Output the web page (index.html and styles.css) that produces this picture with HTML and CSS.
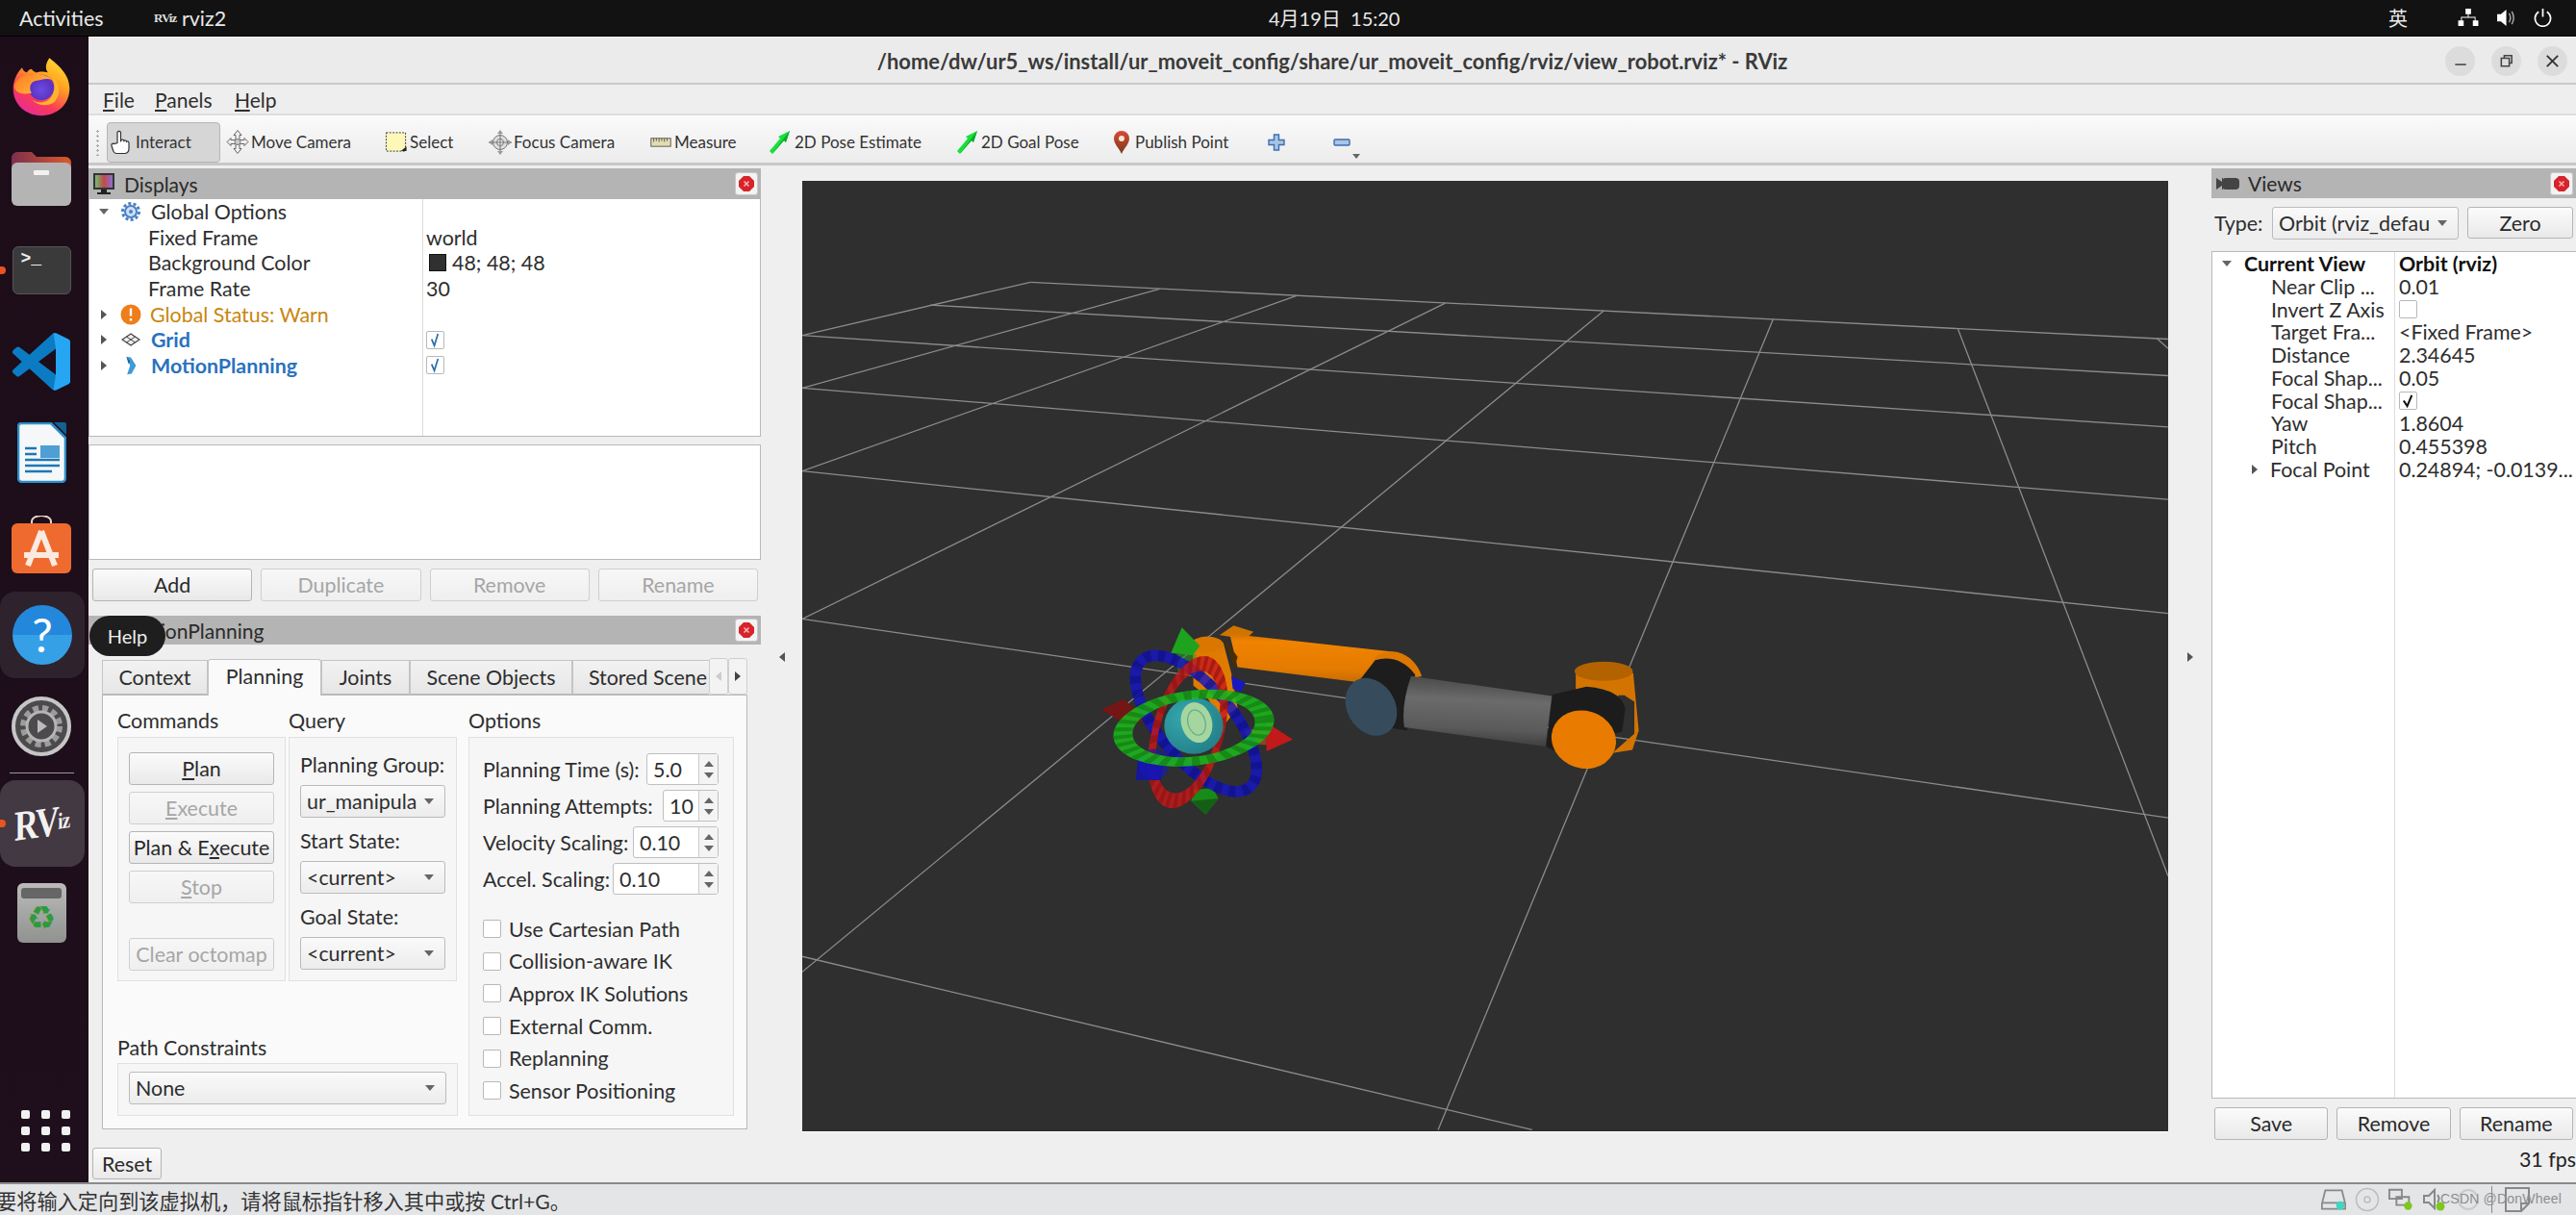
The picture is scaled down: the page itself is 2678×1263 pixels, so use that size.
FILE: index.html
```html
<!DOCTYPE html>
<html lang="en">
<head>
<meta charset="utf-8">
<title>RViz</title>
<link rel="stylesheet" href="styles.css">
</head>
<body>
<div class="desktop">
  <header class="topbar">
    <span class="activities">Activities</span>
    <span class="app-logo">RViz</span>
    <span class="app-name">rviz2</span>
    <span class="clock">4月19日&nbsp;&nbsp;15:20</span>
    <span class="ime">英</span>
    <svg class="tray-net" viewBox="0 0 22 20"><path d="M8 0h6v6H8zM0 13h6v6H0zM16 13h6v6h-6zM10.5 6h1v3H19v4h-1v-3H4v3H3V9h7.500z" fill="#fff"/></svg>
    <svg class="tray-vol" viewBox="0 0 22 20"><path d="M0 6h4l6-5v18l-6-5H0z" fill="#fff"/><path d="M13 5q3 5 0 10M16 3q4 7 0 14" fill="none" stroke="#aaa" stroke-width="1.500"/></svg>
    <svg class="tray-pow" viewBox="0 0 20 20"><path d="M5.500 3.500a8.500 8.500 0 1 0 9 0M10 0v9" fill="none" stroke="#fff" stroke-width="1.800"/></svg>
  </header>

  <div class="middle">
    <nav class="dock">
      <div class="slot">
        <svg class="ic-firefox" viewBox="0 0 180 182">
          <defs>
            <linearGradient id="ff" x1="0.85" y1="0" x2="0.25" y2="1"><stop offset="0" stop-color="#ffe23a"/><stop offset=".35" stop-color="#ffa51f"/><stop offset=".72" stop-color="#f9395a"/><stop offset="1" stop-color="#e52b9a"/></linearGradient>
            <radialGradient id="ffglobe" cx=".5" cy=".6" r=".6"><stop offset="0" stop-color="#6a4be0"/><stop offset=".75" stop-color="#5b32c4"/><stop offset="1" stop-color="#9a2fb0"/></radialGradient>
            <linearGradient id="fftail" x1="0" y1="0" x2="1" y2=".6"><stop offset="0" stop-color="#ff7a1c"/><stop offset="1" stop-color="#ffbc45"/></linearGradient>
          </defs>
          <path d="M115 0C140 20 178 50 178 95C178 145 140 180 90 180C40 180 2 145 2 95C2 70 15 45 30 30C32 38 38 44 45 45C50 38 55 35 60 35C62 40 68 44 75 46C90 40 100 45 110 45C100 30 105 15 115 0Z" fill="url(#ff)"/>
          <circle cx="90" cy="92" r="40" fill="url(#ffglobe)"/>
          <path d="M5 90C10 60 40 50 75 52C90 50 110 55 125 70C105 60 90 70 70 72C55 75 50 95 60 110C30 115 10 110 5 90Z" fill="url(#fftail)"/>
          <path d="M125 62C148 80 152 112 132 136C115 152 80 152 60 130C80 145 110 140 122 120C132 105 135 85 125 62Z" fill="#ffb52e"/>
        </svg>
      </div>
      <div class="slot">
        <svg class="ic-files" viewBox="0 0 62 56"><defs><linearGradient id="tabg" x1="0" y1="0" x2="1" y2="0"><stop offset="0" stop-color="#7d2f4e"/><stop offset="1" stop-color="#dc5a2c"/></linearGradient></defs><path d="M0 6a6 6 0 0 1 6-6h15l5 5h30a6 6 0 0 1 6 6v10H0z" fill="url(#tabg)"/><rect y="11" width="62" height="45" rx="6" fill="#b4b4b4"/><rect x="23" y="19" width="16" height="5" rx="1" fill="#f2f2f2"/></svg>
      </div>
      <div class="slot">
        <div class="ic-term"><span class="term-prompt">&gt;_</span></div>
      </div>
      <div class="slot">
        <svg class="ic-code" viewBox="0 0 100 100"><path d="M96.500 10.800 75.900.9a6.200 6.200 0 0 0-7.100 1.200L29.400 38 12.200 25a4.200 4.200 0 0 0-5.300.2L1.400 30.200a4.200 4.200 0 0 0 0 6.200L16.300 50 1.400 63.600a4.200 4.200 0 0 0 0 6.200l5.500 5a4.200 4.200 0 0 0 5.300.2l17.200-13 39.400 35.900a6.200 6.200 0 0 0 7.100 1.200l20.600-9.900a6.200 6.200 0 0 0 3.500-5.600V16.400a6.200 6.200 0 0 0-3.500-5.600ZM75 72.700 45.100 50 75 27.300Z" fill="#0b7cc4"/><path d="M71 1.200a6.200 6.200 0 0 1 4.900-.3l20.600 9.900a6.200 6.200 0 0 1 3.500 5.600v66.800a6.200 6.200 0 0 1-3.500 5.600l-20.600 9.900a6.200 6.200 0 0 1-4.900-.3L75 72.700V27.300Z" fill="#25a5f2"/></svg>
      </div>
      <div class="slot">
        <svg class="ic-writer" viewBox="0 0 51 63"><path d="M4 1h31l15 15v42a4 4 0 0 1-4 4H5a4 4 0 0 1-4-4V4a3 3 0 0 1 3-3z" fill="#f5f7f8" stroke="#2a8fc9" stroke-width="2.500"/><path d="M38 0l13 13V2a2 2 0 0 0-2-2z" fill="#14608f"/><rect x="24" y="24" width="20" height="13" fill="#4f9ed4"/><path d="M8 27h12M8 33h12M8 39h36M8 45h36M8 51h28" stroke="#1f77b4" stroke-width="2.500"/></svg>
      </div>
      <div class="slot">
        <svg class="ic-store" viewBox="0 0 62 60"><path d="M21 10V6a10 6 0 0 1 20 0v4" fill="none" stroke="#e8d9c8" stroke-width="2"/><rect y="8" width="62" height="52" rx="6" fill="#ef6a2f"/><path d="M31 16 17 52M31 16l14 36M13 41h36" fill="none" stroke="#fbeadf" stroke-width="6"/></svg>
      </div>
      <div class="slot slot-active">
        <div class="ic-help">?</div>
      </div>
      <div class="slot">
        <svg class="ic-settings" viewBox="0 0 62 62"><circle cx="31" cy="31" r="29" fill="#4c4a4c" stroke="#c6c6c6" stroke-width="4"/><circle cx="31" cy="31" r="19" fill="none" stroke="#9c9c9c" stroke-width="6" stroke-dasharray="6 4"/><circle cx="31" cy="31" r="15" fill="#4c4a4c" stroke="#b5b5b5" stroke-width="3"/><path d="M27 24l10 7-10 7z" fill="#bbb"/></svg>
      </div>
      <div class="dock-sep"></div>
      <div class="slot slot-active slot-rviz">
        <span class="running-dot"></span>
        <span class="ic-rviz">RV<small class="iz">iz</small></span>
      </div>
      <div class="slot">
        <div class="ic-trash"><span class="trash-lid"></span><span class="trash-mark">♻</span></div>
      </div>
      <div class="apps">
        <i></i><i></i><i></i><i></i><i></i><i></i><i></i><i></i><i></i>
      </div>
      <span class="running-dot term-dot"></span>
    </nav>

    <div class="tooltip">Help</div>

    <main class="window">
      <div class="titlebar">
        <span class="win-title">/home/dw/ur5_ws/install/ur_moveit_config/share/ur_moveit_config/rviz/view_robot.rviz* - RViz</span>
        <div class="win-btns">
          <span class="win-btn"><svg viewBox="0 0 30 30"><path d="M10 18.500h11" stroke="#444" stroke-width="1.500"/></svg></span>
          <span class="win-btn"><svg viewBox="0 0 30 30"><path d="M10 12h8v8h-8zM13 12V9.500h7.500V17H18" fill="none" stroke="#444" stroke-width="1.500"/></svg></span>
          <span class="win-btn"><svg viewBox="0 0 30 30"><path d="M9.500 9.500l11 11M20.500 9.500l-11 11" stroke="#333" stroke-width="1.800"/></svg></span>
        </div>
      </div>
      <div class="menubar">
        <span class="menu"><u>F</u>ile</span>
        <span class="menu"><u>P</u>anels</span>
        <span class="menu"><u>H</u>elp</span>
      </div>
      <div class="toolbar">
        <span class="grip"></span>
        <div class="tool tool-active tool-interact">
          <svg class="tool-ic" viewBox="0 0 24 26"><path d="M7 14V3a2 2 0 0 1 3.500 0v9l1-1c1-1 2.500 0 2.500 1 1-1 2.500-.5 2.500 .8 1-.8 2.500-.2 2.500 1.200V20a5 5 0 0 1-4 5H6a4 4 0 0 1-3-2l-2-6c-.5-2 2-3 3-2z" fill="#fff" stroke="#333" stroke-width="1.200"/></svg>
          <span>Interact</span>
        </div>
        <div class="tool tool-move">
          <svg class="tool-ic" viewBox="0 0 24 26"><g fill="#eee" stroke="#666"><path d="M12 1l4 5h-2v5h5V9l4 4-4 4v-2h-5v5h2l-4 5-4-5h2v-5H5v2l-4-4 4-4v2h5V6H8z"/></g><circle cx="12" cy="13" r="3" fill="#ccc" stroke="#777"/></svg>
          <span>Move Camera</span>
        </div>
        <div class="tool tool-select">
          <svg class="tool-ic" viewBox="0 0 24 24"><rect x="1" y="2" width="21" height="20" fill="#fdf8b8" stroke="#333" stroke-dasharray="2 1.500"/><path d="M17 22h6v-5z" fill="#222"/></svg>
          <span>Select</span>
        </div>
        <div class="tool tool-focus">
          <svg class="tool-ic" viewBox="0 0 24 26"><circle cx="12" cy="13" r="7.500" fill="#ddd" stroke="#777"/><circle cx="12" cy="13" r="3.500" fill="#eee" stroke="#777"/><path d="M12 1v24M0 13h24" stroke="#777"/><path d="M12 0l3 4H9zM12 26l3-4H9zM0 13l4-3v6zM24 13l-4-3v6z" fill="#999"/></svg>
          <span>Focus Camera</span>
        </div>
        <div class="tool tool-measure">
          <svg class="tool-ic" viewBox="0 0 24 14"><rect x="1" y="3" width="22" height="9" fill="#e4dcae" stroke="#555"/><path d="M4 3v4M7 3v3M10 3v4M13 3v3M16 3v4M19 3v3" stroke="#555"/></svg>
          <span>Measure</span>
        </div>
        <div class="tool tool-pose">
          <svg class="tool-ic" viewBox="0 0 22 24"><path d="M0 21 11 8 9 6 21 0 17 12 15 10 3 24z" fill="#14e23a"/><path d="M3 24 15 10 17 12 21 0 14 9z" fill="#0da82a"/></svg>
          <span>2D Pose Estimate</span>
        </div>
        <div class="tool tool-goal">
          <svg class="tool-ic" viewBox="0 0 22 24"><path d="M0 21 11 8 9 6 21 0 17 12 15 10 3 24z" fill="#14e23a"/><path d="M3 24 15 10 17 12 21 0 14 9z" fill="#0da82a"/></svg>
          <span>2D Goal Pose</span>
        </div>
        <div class="tool tool-point">
          <svg class="tool-ic" viewBox="0 0 16 24"><defs><linearGradient id="pin" x1="0" y1="0" x2="0" y2="1"><stop offset="0" stop-color="#d94a35"/><stop offset="1" stop-color="#7a3a1a"/></linearGradient></defs><path d="M8 0a8 8 0 0 1 8 8c0 6-5 9-8 16C5 17 0 14 0 8a8 8 0 0 1 8-8z" fill="url(#pin)"/><circle cx="8" cy="8" r="3" fill="#f6e6d8"/></svg>
          <span>Publish Point</span>
        </div>
        <div class="tool tool-plus">
          <svg class="tool-ic" viewBox="0 0 18 18"><path d="M6.500 1h5v5.500H17v5h-5.500V17h-5v-5.500H1v-5h5.500z" fill="#a9c4e6" stroke="#3d6eb0" stroke-width="1.400"/></svg>
        </div>
        <div class="tool tool-minus">
          <svg class="tool-ic" viewBox="0 0 18 8"><rect x="1" y="1" width="16" height="6" rx="1" fill="#a9c4e6" stroke="#3d6eb0" stroke-width="1.400"/></svg>
          <span class="more-arrow"></span>
        </div>
      </div>

      <div class="workspace">
        <section class="left-dock">
          <div class="panel-title">
            <svg class="panel-ic" viewBox="0 0 24 24"><rect x="1" y="1" width="22" height="17" fill="#333"/><defs><linearGradient id="mon" x1="0" y1="0" x2="1" y2="0"><stop offset="0" stop-color="#6fbf73"/><stop offset=".5" stop-color="#c04a4a"/><stop offset="1" stop-color="#8a6fd1"/></linearGradient></defs><rect x="3" y="3" width="18" height="13" fill="url(#mon)"/><path d="M9 18h6v3h4v2H5v-2h4z" fill="#222"/></svg>
            <span>Displays</span>
            <span class="close-btn"><svg viewBox="0 0 16 16"><path d="M5 0h6l5 5v6l-5 5H5l-5-5V5z" fill="#d8232a"/><path d="M5.500 5.500l5 5M10.500 5.500l-5 5" stroke="#f4b7b7" stroke-width="1.500"/></svg></span>
          </div>
          <div class="tree tree-displays">
            <div class="row">
              <span class="tw tw-open"></span>
              <svg class="node-ic" viewBox="0 0 20 20"><circle cx="10" cy="10" r="6" fill="#cfe0f5" stroke="#4a80c4" stroke-width="2"/><circle cx="10" cy="10" r="8.500" fill="none" stroke="#4a80c4" stroke-width="3" stroke-dasharray="3 2.300"/><circle cx="10" cy="10" r="2" fill="#4a80c4"/></svg>
              <span class="name">Global Options</span>
            </div>
            <div class="row row-child"><span class="name">Fixed Frame</span><span class="val">world</span></div>
            <div class="row row-child"><span class="name">Background Color</span><span class="val"><span class="swatch"></span>48; 48; 48</span></div>
            <div class="row row-child"><span class="name">Frame Rate</span><span class="val">30</span></div>
            <div class="row">
              <span class="tw"></span>
              <svg class="node-ic node-warn" viewBox="0 0 22 22"><circle cx="11" cy="11" r="10.500" fill="#ee7d1c"/><path d="M11 4.500v8M11 15v2.500" stroke="#fff" stroke-width="2.400"/></svg>
              <span class="name warn">Global Status: Warn</span>
            </div>
            <div class="row">
              <span class="tw"></span>
              <svg class="node-ic" viewBox="0 0 20 14"><path d="M10 1l9 6-9 6-9-6z" fill="#eee" stroke="#444" stroke-width="1.300"/><path d="M5.500 4l9 6M14.500 4l-9 6" stroke="#444"/></svg>
              <span class="name link">Grid</span>
              <span class="val"><span class="check check-blue"><svg viewBox="0 0 18 18"><path d="M5 8l3 7 4-13" fill="none" stroke="#2a6cb0" stroke-width="1.800"/></svg></span></span>
            </div>
            <div class="row">
              <span class="tw"></span>
              <svg class="node-ic" viewBox="0 0 18 26"><path d="M3 1l6 1 7 11-6 11-6 1 4-12z" fill="#3d9bd6"/><path d="M3 1l5 6-2 4z" fill="#1f5f8c"/></svg>
              <span class="name link">MotionPlanning</span>
              <span class="val"><span class="check check-blue"><svg viewBox="0 0 18 18"><path d="M5 8l3 7 4-13" fill="none" stroke="#2a6cb0" stroke-width="1.800"/></svg></span></span>
            </div>
          </div>
          <div class="desc-box"></div>
          <div class="btn-row">
            <button class="btn">Add</button>
            <button class="btn" disabled>Duplicate</button>
            <button class="btn" disabled>Remove</button>
            <button class="btn" disabled>Rename</button>
          </div>

          <div class="panel-title panel-title-mp">
            <span class="mp-title">MotionPlanning</span>
            <span class="close-btn"><svg viewBox="0 0 16 16"><path d="M5 0h6l5 5v6l-5 5H5l-5-5V5z" fill="#d8232a"/><path d="M5.500 5.500l5 5M10.500 5.500l-5 5" stroke="#f4b7b7" stroke-width="1.500"/></svg></span>
          </div>

          <div class="tabs">
            <span class="tab tab-context">Context</span>
            <span class="tab tab-planning">Planning</span>
            <span class="tab tab-joints">Joints</span>
            <span class="tab tab-scene">Scene Objects</span>
            <span class="tab tab-stored">Stored Scene</span>
            <span class="tab-scroll"><span class="tri-left"></span></span>
            <span class="tab-scroll"><span class="tri-right"></span></span>
          </div>
          <div class="pane">
            <div class="pane-left">
              <div class="pane-top">
                <div class="col-cmd">
                  <h4 class="heading">Commands</h4>
                  <div class="group group-cmd">
                    <button class="btn"><u>P</u>lan</button>
                    <button class="btn" disabled><u>E</u>xecute</button>
                    <button class="btn">Plan &amp; E<u>x</u>ecute</button>
                    <button class="btn" disabled><u>S</u>top</button>
                    <button class="btn btn-clear" disabled>Clear octomap</button>
                  </div>
                </div>
                <div class="col-query">
                  <h4 class="heading">Query</h4>
                  <div class="group group-query">
                    <label class="qlabel">Planning Group:</label>
                    <div class="combo"><span class="combo-text">ur_manipulator</span><span class="tri-down"></span></div>
                    <label class="qlabel">Start State:</label>
                    <div class="combo"><span class="combo-text">&lt;current&gt;</span><span class="tri-down"></span></div>
                    <label class="qlabel">Goal State:</label>
                    <div class="combo"><span class="combo-text">&lt;current&gt;</span><span class="tri-down"></span></div>
                  </div>
                </div>
              </div>
              <div class="col-path">
                <h4 class="heading heading-path">Path Constraints</h4>
                <div class="group group-path">
                  <div class="combo"><span class="combo-text">None</span><span class="tri-down"></span></div>
                </div>
              </div>
            </div>
            <div class="col-options">
              <h4 class="heading">Options</h4>
              <div class="group group-options">
                <div class="spin-row"><span class="lbl-time">Planning Time (s):</span><div class="spin"><span class="spin-text">5.0</span><span class="steppers"><span class="tri-up"></span><span class="tri-down"></span></span></div></div>
                <div class="spin-row"><span class="lbl-att">Planning Attempts:</span><div class="spin"><span class="spin-text">10</span><span class="steppers"><span class="tri-up"></span><span class="tri-down"></span></span></div></div>
                <div class="spin-row"><span class="lbl-vel">Velocity Scaling:</span><div class="spin"><span class="spin-text">0.10</span><span class="steppers"><span class="tri-up"></span><span class="tri-down"></span></span></div></div>
                <div class="spin-row"><span class="lbl-acc">Accel. Scaling:</span><div class="spin"><span class="spin-text">0.10</span><span class="steppers"><span class="tri-up"></span><span class="tri-down"></span></span></div></div>
                <div class="checks">
                  <div class="opt"><span class="check"></span>Use Cartesian Path</div>
                  <div class="opt"><span class="check"></span>Collision-aware IK</div>
                  <div class="opt"><span class="check"></span>Approx IK Solutions</div>
                  <div class="opt"><span class="check"></span>External Comm.</div>
                  <div class="opt"><span class="check"></span>Replanning</div>
                  <div class="opt"><span class="check"></span>Sensor Positioning</div>
                </div>
              </div>
            </div>
          </div>
          <button class="btn btn-reset">Reset</button>
        </section>

        <section class="center">
          <span class="split-arrow"><span class="tri-left tri-dark"></span></span>
          <div class="viewport">
            <svg class="scene" viewBox="0 0 1420 989" preserveAspectRatio="none">
              <defs>
                <linearGradient id="cyl" x1="0.1" y1="0" x2="0" y2="1"><stop offset="0" stop-color="#4a4a4a"/><stop offset=".3" stop-color="#6b6b6b"/><stop offset=".7" stop-color="#5a5a5a"/><stop offset="1" stop-color="#333"/></linearGradient>
                <linearGradient id="org" x1="0.05" y1="0" x2="0" y2="1"><stop offset="0" stop-color="#cf7200"/><stop offset=".15" stop-color="#f08300"/><stop offset=".7" stop-color="#e47b00"/><stop offset="1" stop-color="#c26a00"/></linearGradient>
                <radialGradient id="sph" cx=".35" cy=".35" r=".8"><stop offset="0" stop-color="#36aeb6"/><stop offset="1" stop-color="#1f7f88"/></radialGradient>
              </defs>
              <g transform="translate(-14 -8) scale(.9311 .6443)" class="grid">
                <path d="M270 176 1540 268M158 213 1540 327M15 262 1540 410M15 347 1540 527M15 481 1540 711M15 720 1540 1041M15 1265 830 1545"/>
                <path d="M270 176 15 262M414 187 15 347M567 198 15 481M733 210 15 720M910 222 15 1290M1099 236 725 1545M1305 250 1540 1135M1527 266 1540 283"/>
              </g>
              <!-- robot links -->
              <g transform="translate(266 432) scale(.4146 .3333)">
                <path d="M405 122 440 92 490 112 470 135Z" fill="#d07400"/>
                <path d="M430 118 845 175 900 240 760 270 450 222 Z" fill="url(#org)"/>
                <path d="M790 195q20-25 60-20 45 15 62 75l-30 10z" fill="#dc7800"/>
                <path d="M755 265 795 200q60-20 100 45l-20 175-50-10z" fill="#1d1d1d"/>
                <path d="M885 250 1238 312 1222 470 868 410q-8-70 17-160z" fill="url(#cyl)"/>
                <ellipse cx="785" cy="346" rx="62" ry="92" transform="rotate(-16 785 346)" fill="#364c5c"/>
                <path d="M1298 235V310H1420L1445 330V430L1390 490 1440 480 1456 420 1442 240Z" fill="#d47400"/>
                <ellipse cx="1368" cy="235" rx="73" ry="30" fill="#b26300"/>
                <path d="M1240 308 1325 283q90 10 97 70l-8 70-160 65-30-18z" fill="#1c1c1c"/>
                <ellipse cx="1318" cy="448" rx="80" ry="92" transform="rotate(-16 1318 448)" fill="#e97b00"/>
              </g>
              <!-- wrist and interactive marker; drawn at one third scale -->
              <g transform="translate(306 452) scale(.3333)">
                <path d="M300 100 395 85 420 180 440 290 400 340 340 250 302 220Z" fill="#e07b00"/>
                <ellipse cx="345" cy="92" rx="50" ry="26" fill="#d97700"/>
                <path d="M395 70 440 130 430 165 412 110Z" fill="#4a2e00"/>
                <path d="M250 120 312 122 302 190 255 180Z" fill="#2c9a2c" opacity=".55"/>
                <path d="M266 38 322 95 300 125 232 118Z" fill="#1ea31e"/>
                <path d="M465 360 530 345 530 405 470 400Z" fill="#b84a22" opacity=".7"/>
                <path d="M612 388 530 335 530 425Z" fill="#c21a1a"/>
                <path d="M15 295 85 262 155 325 100 345Z" fill="#741616"/>
                <path d="M420 190 465 210 450 240 425 230Z" fill="#1818c0"/>
                <path d="M300 545 362 540 380 572 340 622 295 580Z" fill="#188a18"/>
                <path d="M340 622 295 580 380 572Z" fill="#155f15"/>
                <ellipse cx="310" cy="338" rx="115" ry="260" transform="rotate(-40 310 338)" class="ring ring-blue"/>
                <ellipse cx="310" cy="338" rx="115" ry="260" transform="rotate(-40 310 338)" class="ring ring-blue-d"/>
                <circle r="100" transform="translate(285 365) rotate(15) scale(1 2.2)" class="ring ring-red"/>
                <circle r="100" transform="translate(285 365) rotate(15) scale(1 2.2)" class="ring ring-red-d"/>
                <path d="M122 515 130 440 210 450 200 515Z" fill="#1414a8" opacity=".9"/>
                <circle cx="180" cy="465" r="48" fill="#1616c0" opacity=".55"/>
                <ellipse cx="303" cy="345" rx="92" ry="88" fill="url(#sph)" opacity=".95"/>
                <ellipse cx="312" cy="335" rx="48" ry="64" transform="rotate(-15 312 335)" fill="#a6d6a0"/>
                <ellipse cx="312" cy="335" rx="27" ry="40" transform="rotate(-15 312 335)" fill="none" stroke="#6aae86" stroke-width="4"/>
                <circle r="100" transform="translate(303 352) rotate(-7) scale(2.22 1.03)" class="ring ring-green"/>
                <circle r="100" transform="translate(303 352) rotate(-7) scale(2.22 1.03)" class="ring ring-green-d"/>
              </g>
            </svg>
          </div>
          <span class="split-arrow split-right"><span class="tri-right tri-dark"></span></span>
        </section>

        <section class="right-dock">
          <div class="panel-title panel-title-views">
            <svg class="panel-ic" viewBox="0 0 24 14"><path d="M0 1l6 4V1h1v12H6V9l-6 4z" fill="#444"/><rect x="6" y="1" width="18" height="12" rx="4" fill="#444"/></svg>
            <span>Views</span>
            <span class="close-btn"><svg viewBox="0 0 16 16"><path d="M5 0h6l5 5v6l-5 5H5l-5-5V5z" fill="#d8232a"/><path d="M5.500 5.500l5 5M10.500 5.500l-5 5" stroke="#f4b7b7" stroke-width="1.500"/></svg></span>
          </div>
          <div class="type-row">
            <span class="type-lbl">Type:</span>
            <div class="combo combo-type"><span class="combo-text">Orbit (rviz_default_plugins)</span><span class="tri-down"></span></div>
            <button class="btn btn-zero">Zero</button>
          </div>
          <div class="tree tree-views">
            <div class="vrow vrow-head"><span class="tw tw-open"></span><span class="vname">Current View</span><span class="vval">Orbit (rviz)</span></div>
            <div class="vrow"><span class="vname">Near Clip ...</span><span class="vval">0.01</span></div>
            <div class="vrow"><span class="vname">Invert Z Axis</span><span class="vval"><span class="check"></span></span></div>
            <div class="vrow"><span class="vname">Target Fra...</span><span class="vval">&lt;Fixed Frame&gt;</span></div>
            <div class="vrow"><span class="vname">Distance</span><span class="vval">2.34645</span></div>
            <div class="vrow"><span class="vname">Focal Shap...</span><span class="vval">0.05</span></div>
            <div class="vrow"><span class="vname">Focal Shap...</span><span class="vval"><span class="check"><svg viewBox="0 0 18 18"><path d="M4 9l4 6 5-12" fill="none" stroke="#111" stroke-width="2.200"/></svg></span></span></div>
            <div class="vrow"><span class="vname">Yaw</span><span class="vval">1.8604</span></div>
            <div class="vrow"><span class="vname">Pitch</span><span class="vval">0.455398</span></div>
            <div class="vrow vrow-sub"><span class="tw"></span><span class="vname">Focal Point</span><span class="vval">0.24894; -0.0139...</span></div>
          </div>
          <div class="btn-row btn-row-views">
            <button class="btn">Save</button>
            <button class="btn">Remove</button>
            <button class="btn">Rename</button>
          </div>
          <div class="fps">31 fps</div>
        </section>
      </div>
    </main>
  </div>

  <footer class="statusbar">
    <span class="status-msg">要将输入定向到该虚拟机，请将鼠标指针移入其中或按 Ctrl+G。</span>
    <div class="vm-icons">
      <svg class="vm-ic" viewBox="0 0 30 26"><path d="M5 2h20l4 16v6H1v-6zM1 17h28" fill="none" stroke="#888" stroke-width="2"/><circle cx="23" cy="20" r="5" fill="#3fd6c2"/></svg>
      <svg class="vm-ic" viewBox="0 0 26 26"><circle cx="13" cy="13" r="11.500" fill="none" stroke="#bdbdbd" stroke-width="1.500"/><circle cx="13" cy="13" r="3" fill="none" stroke="#bdbdbd" stroke-width="1.500"/></svg>
      <svg class="vm-ic" viewBox="0 0 28 26"><path d="M1 2h14v10H1zM9 10h14v9H9z" fill="none" stroke="#888" stroke-width="2"/><circle cx="22" cy="20" r="4.500" fill="#7cc81e"/></svg>
      <svg class="vm-ic" viewBox="0 0 24 26"><path d="M1 9h5l6-6v19l-6-6H1z" fill="none" stroke="#888" stroke-width="2"/><path d="M15 8q3 4 0 8" fill="none" stroke="#888" stroke-width="2"/><circle cx="18" cy="20" r="4.500" fill="#7cc81e"/></svg>
      <svg class="vm-ic vm-ic-faint" viewBox="0 0 26 26"><circle cx="13" cy="13" r="10" fill="none" stroke="#c4c4c4" stroke-width="2"/></svg>
      <span class="vm-sep"></span>
      <svg class="vm-ic" viewBox="0 0 26 26"><path d="M1 1h24v16l-8 8H1z" fill="none" stroke="#888" stroke-width="2"/><path d="M17 25v-8h8" fill="none" stroke="#888" stroke-width="2"/></svg>
    </div>
    <span class="watermark">CSDN @DonWheel</span>
  </footer>
</div>
</body>
</html>
```

FILE: styles.css
```css
* { box-sizing: border-box; }
html, body { margin: 0; padding: 0; height: 100%; }
body { font-family: "Lato", "Noto Sans CJK SC", sans-serif; font-size: 21.4px; color: #2e2e2e; overflow: hidden; background: #efefef; }
h4 { margin: 0; font-weight: 400; font-size: inherit; }
u { text-decoration-thickness: 2px; text-underline-offset: 2px; }
svg { display: block; }

.desktop { width: 2678px; height: 1263px; display: flex; flex-direction: column; }

/* top bar */
.topbar { height: 38px; flex: none; background: #121212; color: #e9e9e9; display: flex; align-items: center; border-bottom: 1px solid #000; font-size: 21.4px; position: relative; }
.activities { margin-left: 20px; width: 140px; }
.app-logo { width: 29px; font: 700 13px "Liberation Serif", serif; color: #ddd; letter-spacing: -1px; }
.app-name { width: 1130px; }
.clock { font-family: "Lato", "Noto Sans CJK SC", sans-serif; width: 1172px; font-size: 20px; }
.ime { font-family: "Noto Sans CJK SC", sans-serif; width: 70px; margin-left: -8px; font-size: 20px; }
.tray-net { width: 22px; height: 19px; margin-left: 2px; }
.tray-vol { width: 21px; height: 19px; margin-left: 19px; }
.tray-pow { width: 19px; height: 19px; margin-left: 17px; }

.middle { flex: 1; display: flex; min-height: 0; position: relative; }

/* dock */
.dock { width: 92px; flex: none; background: linear-gradient(#1c0d19, #1f0f1c); display: flex; flex-direction: column; padding: 5px 0 32px; position: relative; }
.slot { height: 95px; flex: none; display: flex; align-items: center; justify-content: center; width: 86px; position: relative; }
.slot-active { background: #2e222d; width: 88px; height: 90px; margin-block: 2px; border-radius: 16px; }
.slot-rviz { margin-block: 2px 0; background: #433942; }
.ic-firefox { width: 60px; height: 61px; }
.ic-files { width: 62px; height: 56px; }
.ic-term { width: 61px; height: 50px; background: #3a3a3a; border-radius: 6px; border: 1px solid #555; padding: 2px 8px; color: #eee; font: 700 18px/20px "Liberation Mono", monospace; }
.term-prompt { display: block; }
.ic-code { width: 60px; height: 60px; }
.ic-writer { width: 51px; height: 63px; }
.ic-store { width: 62px; height: 60px; }
.ic-help { width: 62px; height: 62px; border-radius: 50%; background: linear-gradient(#2388dc 50%, #36a0e6 50%); color: #fff; font: 400 48px/62px "Lato", sans-serif; text-align: center; }
.ic-settings { width: 62px; height: 62px; }
.dock-sep { height: 1px; background: #9a9a9a; margin: 1px 15px 5px 10px; width: 67px; flex: none; }
.ic-rviz { font: 700 44px/1 "Liberation Serif", serif; color: #f2f2f2; letter-spacing: -2px; transform: skewY(-8deg) scaleX(.78); white-space: nowrap; }
.iz { font-size: 24px; letter-spacing: -1px; vertical-align: 6px; }
.running-dot { position: absolute; left: 0; width: 6px; height: 8px; background: #e95420; border-radius: 0 4px 4px 0; }
.term-dot { top: 239px; }
.ic-trash { width: 51px; height: 62px; background: linear-gradient(#bbb, #8f928e); border-radius: 6px; display: flex; flex-direction: column; align-items: center; padding-top: 5px; }
.trash-lid { width: 42px; height: 11px; background: #666; border-radius: 3px; flex: none; }
.trash-mark { color: #2f9a3a; font: 700 34px/40px "DejaVu Sans", sans-serif; }
.apps { margin-top: auto; margin-left: 22px; width: 51px; display: grid; grid-template-columns: repeat(3, 9px); gap: 8px 12px; }
.apps i { width: 9px; height: 9px; background: #f1f1f1; border-radius: 2px; }

.tooltip { position: absolute; left: 93px; top: 602px; width: 79px; height: 42px; border-radius: 21px; background: #1e1e1e; color: #eee; font-size: 20px; line-height: 42px; text-align: center; z-index: 5; }

/* window */
.window { flex: 1; display: flex; flex-direction: column; min-width: 0; background: #efefef; }
.titlebar { height: 50px; flex: none; background: #ebebeb; border-bottom: 2px solid #c9c9c9; border-top: 1px solid #f6f6f6; display: flex; align-items: center; justify-content: center; position: relative; padding-top: 2px; }
.win-title { font-weight: 700; font-size: 21.9px; color: #3a3a3a; }
.win-btns { position: absolute; right: 9px; top: 9px; display: flex; gap: 17px; }
.win-btn { width: 31px; height: 31px; border-radius: 50%; background: #dcdcdc; }
.menubar { height: 32px; flex: none; background: #eeeeee; border-bottom: 2px solid #dedede; display: flex; align-items: center; font-size: 21px; padding-left: 15px; }
.menu:nth-child(1) { width: 54px; }
.menu:nth-child(2) { width: 83px; }
.toolbar { height: 52px; flex: none; background: linear-gradient(#fafafa, #ececec); border-bottom: 3px solid #c8c8c8; display: flex; align-items: center; font-size: 17px; color: #333; padding-top: 6px; }
.grip { width: 5px; height: 28px; margin: 0 7px 0 7px; background-image: radial-gradient(#aaa 1px, transparent 1.2px); background-size: 5px 5px; flex: none; }
.tool { display: flex; align-items: center; gap: 2px; flex: none; height: 42px; position: relative; }
.tool-active { background: #d6d6d6; border: 1px solid #b5b5b5; border-radius: 4px; padding-left: 3px; }
.tool-interact { width: 118px; margin-right: 6px; }
.tool-move { width: 165px; }
.tool-select { width: 108px; }
.tool-focus { width: 167px; }
.tool-measure { width: 125px; }
.tool-pose { width: 195px; gap: 4px; }
.tool-goal { width: 163px; gap: 3px; }
.tool-point { width: 160px; }
.tool-plus { width: 68px; }
.tool-ic { flex: none; }
.tool-interact .tool-ic, .tool-move .tool-ic { width: 24px; height: 27px; }
.tool-select .tool-ic { width: 24px; height: 23px; }
.tool-focus .tool-ic { width: 24px; height: 26px; }
.tool-measure .tool-ic { width: 24px; height: 13px; }
.tool-pose .tool-ic, .tool-goal .tool-ic { width: 22px; height: 24px; }
.tool-point .tool-ic { width: 16px; height: 24px; margin-right: 4px; }
.tool-plus .tool-ic { width: 18px; height: 18px; }
.tool-minus .tool-ic { width: 18px; height: 8px; }
.more-arrow { position: absolute; left: 20px; top: 33px; border: 4px solid transparent; border-top: 5px solid #666; border-bottom: 0; }

.workspace { flex: 1; display: flex; min-height: 0; }

/* panels */
.left-dock { width: 699px; flex: none; display: flex; flex-direction: column; padding-top: 3px; }
.panel-title { height: 32px; flex: none; background: #b4b4b4; display: flex; align-items: center; padding: 0 3px 0 4px; font-size: 21px; gap: 9px; color: #2a2a2a; }
.close-btn { margin-left: auto; width: 24px; height: 24px; background: #f3f3f3; border: 1px solid #c8c8c8; border-radius: 3px; padding: 3px; }
.panel-ic { width: 24px; height: 24px; flex: none; }
.panel-title-mp { height: 30px; margin-top: 15px; padding-left: 36px; }

.tree { background-color: #fff; border: 1px solid #b9b9b9; }
.tree-displays { height: 247px; flex: none; padding-top: 1px; border-top: 0; background-image: linear-gradient(#ddd, #ddd); background-size: 1px 100%; background-repeat: no-repeat; background-position: 346px 0; }
.row { height: 26.6px; display: flex; align-items: center; position: relative; padding-bottom: 2px; }
.row-child { padding-left: 61px; }
.tw { width: 30px; flex: none; display: flex; justify-content: center; }
.tw::before { content: ""; border-style: solid; border-width: 5px 0 5px 6px; border-color: transparent transparent transparent #555; }
.tw-open::before { border-width: 6px 5px 0 5px; border-color: #666 transparent transparent transparent; }
.node-ic { width: 20px; height: 20px; margin: 0 11px 0 3px; flex: none; }
.node-warn { width: 22px; height: 22px; margin: 0 9px 0 2px; }
.name { flex: none; }
.val { position: absolute; left: 350px; display: flex; align-items: center; gap: 6px; }
.warn { color: #c8860f; }
.link { color: #2a72bd; font-weight: 700; }
.swatch { width: 18px; height: 18px; background: #303030; border: 1px solid #111; margin-left: 3px; }
.check { width: 19px; height: 19px; background: #fff; border: 1px solid #b8b8b8; border-radius: 2px; display: inline-block; flex: none; }
.desc-box { height: 120px; flex: none; margin-top: 8px; background: #fff; border: 1px solid #b9b9b9; }
.btn-row { display: flex; gap: 9px; margin-top: 9px; padding: 0 3px 0 4px; flex: none; }
.btn-row .btn { flex: 1; }
.btn { height: 34px; background: linear-gradient(#fbfbfb, #e9e9e9); border: 1px solid #b5b5b5; border-radius: 3px; font: inherit; font-size: 21.4px; color: #2a2a2a; padding: 0; }
.btn:disabled { color: #a6a6a6; background: linear-gradient(#f7f7f7, #efefef); border-color: #cfcfcf; }

/* tabs */
.tabs { display: flex; height: 38px; margin: 14px 0 0 14px; align-items: flex-end; flex: none; }
.tab { height: 36px; background: linear-gradient(#f2f2f2, #e6e6e6); border: 1px solid #c4c4c4; border-bottom: 1px solid #b9b9b9; display: flex; align-items: center; justify-content: center; flex: none; }
.tab-context { width: 110px; }
.tab-planning { width: 118px; height: 38px; background: #fafafa; border-bottom: 0; padding-bottom: 4px; border-radius: 3px 3px 0 0; position: relative; z-index: 1; margin-bottom: -1px; }
.tab-joints { width: 92px; }
.tab-scene { width: 169px; }
.tab-stored { width: 142px; overflow: hidden; justify-content: flex-start; padding-left: 16px; white-space: nowrap; border-right: 0; }
.tab-scroll { width: 20px; height: 38px; background: #f3f3f3; border: 1px solid #cfcfcf; border-radius: 3px; display: flex; align-items: center; justify-content: center; flex: none; }
.tri-left { border-style: solid; border-width: 5px 6px 5px 0; border-color: transparent #ccc transparent transparent; }
.tri-right { border-style: solid; border-width: 5px 0 5px 6px; border-color: transparent transparent transparent #444; }
.tri-dark { border-right-color: #555; border-left-color: #555; }
.tri-up { border-style: solid; border-width: 0 5px 6px 5px; border-color: transparent transparent #666 transparent; }
.tri-down { border-style: solid; border-width: 6px 5px 0 5px; border-color: #666 transparent transparent transparent; flex: none; }
.pane { height: 452px; flex: none; margin-left: 14px; width: 671px; background: #fafafa; border: 1px solid #b9b9b9; display: flex; padding: 0 14px 13px 15px; }
.pane-left { width: 354px; flex: none; display: flex; flex-direction: column; }
.pane-top { display: flex; gap: 3px; }
.col-cmd, .col-query { width: 175px; flex: none; }
.heading { height: 43px; padding-top: 16px; line-height: 20px; color: #2e2e2e; }
.group { background: #f6f6f6; border: 1px solid #e1e1e1; }
.group-cmd { height: 254px; padding: 15px 11px 0; display: flex; flex-direction: column; gap: 7px; }
.group-cmd .btn { flex: none; }
.btn-clear { margin-top: 29px; }
.group-query { height: 254px; padding: 18px 11px 0; display: flex; flex-direction: column; }
.qlabel { height: 20px; line-height: 20px; margin-bottom: 11px; flex: none; white-space: nowrap; }
.group-query .combo { margin-bottom: 14px; }
.combo { height: 34px; background: linear-gradient(#fafafa, #ececec); border: 1px solid #bbb; border-radius: 3px; display: flex; align-items: center; padding: 0 11px 0 6px; gap: 8px; flex: none; }
.combo-text { flex: 1; overflow: hidden; white-space: nowrap; min-width: 0; }
.col-path { margin-top: auto; }
.heading-path { height: 37px; padding-top: 0; line-height: 18px; margin-bottom: -12px; }
.group-path { height: 55px; padding: 8px 11px 0; }
.col-options { width: 276px; flex: none; margin-left: 11px; }
.group-options { height: 394px; padding: 16px 15px 0 14px; }
.spin-row { display: flex; align-items: center; height: 33px; margin-bottom: 5px; white-space: nowrap; }
.lbl-time { width: 170px; }
.lbl-att { width: 187px; }
.lbl-vel { width: 156px; }
.lbl-acc { width: 135px; }
.spin { flex: 1; height: 33px; background: #fff; border: 1px solid #c0c0c0; border-radius: 3px; display: flex; align-items: center; padding-left: 6px; }
.spin-text { flex: 1; }
.steppers { width: 20px; height: 100%; border-left: 1px solid #ccc; display: flex; flex-direction: column; justify-content: center; align-items: center; gap: 6px; background: #f4f4f4; flex: none; }
.checks { margin-top: 19px; }
.opt { height: 33.6px; display: flex; align-items: center; gap: 8px; }
.btn-reset { width: 72px; height: 33px; margin: 19px 0 0 4px; flex: none; }

/* center */
.center { flex: 1; display: flex; align-items: flex-start; min-width: 0; padding-top: 16px; }
.split-arrow { width: 43px; height: 989px; flex: none; display: flex; align-items: center; justify-content: center; }
.split-right { width: 45px; }
.viewport { width: 1420px; height: 989px; flex: none; background: #2f2f2f; border-bottom: 1px solid #fff; }
.scene { width: 100%; height: 100%; }
.grid path { fill: none; stroke: #8c8c8c; stroke-width: 1.300; vector-effect: non-scaling-stroke; }
.ring { fill: none; }
.ring-blue { stroke: #1616c4; stroke-width: 34; opacity: .82; }
.ring-blue-d { stroke: #0e0e80; stroke-width: 34; stroke-dasharray: 22 22; opacity: .55; }
.ring-red { stroke: #c81a1a; stroke-width: 22; opacity: .82; }
.ring-red-d { stroke: #8a1212; stroke-width: 22; stroke-dasharray: 11 11; opacity: .6; }
.ring-green { stroke: #1cb81c; stroke-width: 27; opacity: .88; }
.ring-green-d { stroke: #127a12; stroke-width: 27; stroke-dasharray: 11 11; opacity: .65; }

/* right */
.right-dock { width: 379px; flex: none; display: flex; flex-direction: column; padding-top: 3px; font-size: 21.4px; }
.panel-title-views { height: 31px; padding-left: 5px; }
.panel-title-views .panel-ic { height: 14px; }
.type-row { display: flex; align-items: center; margin-top: 9px; height: 33px; padding-left: 3px; flex: none; }
.type-lbl { width: 60px; flex: none; }
.combo-type { width: 194px; }
.btn-zero { width: 110px; margin-left: 9px; height: 33px; }
.tree-views { height: 881px; flex: none; margin-top: 13px; border-right: 0; background-image: linear-gradient(#ddd, #ddd); background-size: 1px 100%; background-repeat: no-repeat; background-position: 189px 0; padding-top: 1px; }
.vrow { height: 23.8px; padding-left: 61px; display: flex; align-items: center; position: relative; padding-bottom: 2px; }
.vrow-head { padding-left: 0; font-weight: 700; color: #111; }
.vrow-head .vname { margin-left: 3px; }
.vrow-sub { padding-left: 28px; }
.vrow-sub .tw { width: 32px; }
.vrow-head .tw { width: 30px; }
.vval { position: absolute; left: 194px; white-space: nowrap; display: flex; align-items: center; }
.btn-row-views { margin-top: 9px; padding: 0 3px; gap: 9px; }
.btn-row-views .btn { height: 34px; }
.fps { text-align: right; margin-top: 10px; color: #222; line-height: 20px; }

/* status bar */
.statusbar { height: 34px; flex: none; background: #e4e5e7; border-top: 2px solid #8a8a8a; display: flex; align-items: center; position: relative; font-size: 21.2px; overflow: hidden; }
.status-msg { margin-left: -4px; white-space: nowrap; color: #333; }
.vm-icons { margin-left: auto; display: flex; align-items: center; gap: 9px; margin-right: 48px; }
.vm-ic { width: 26px; height: 26px; }
.vm-ic-faint { opacity: .8; }
.vm-sep { width: 1px; height: 28px; background: #888; margin: 0 4px 0 2px; }
.watermark { position: absolute; right: 15px; top: 7px; font: 400 14px "Liberation Sans", sans-serif; color: #8e8e8e; letter-spacing: .2px; }
```
